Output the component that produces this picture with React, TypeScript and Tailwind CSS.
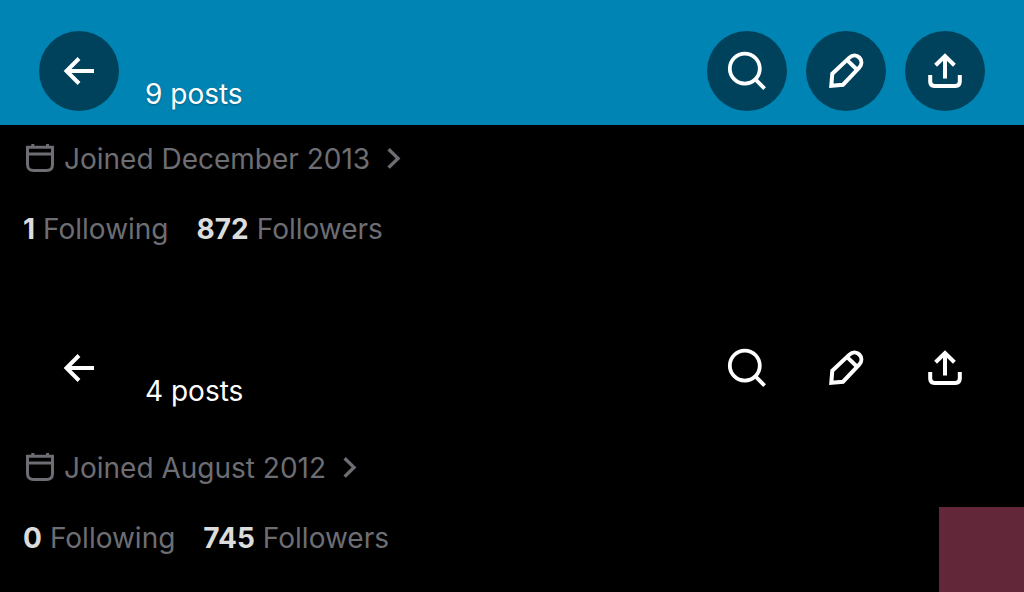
import clsx from "clsx"

type Profile = {
  posts: number
  joined: string
  following: number
  followers: number
}

const first: Profile = { posts: 9, joined: "December 2013", following: 1, followers: 872 }
const second: Profile = { posts: 4, joined: "August 2012", following: 0, followers: 745 }

const actions = [
  { label: "Search", Icon: SearchIcon },
  { label: "Edit", Icon: PencilIcon },
  { label: "Share", Icon: ShareIcon },
]

function BackIcon() {
  return (
    <svg viewBox="0 0 40 40" className="size-10" fill="none" stroke="currentColor" strokeWidth="4">
      <path d="M35 20H7M20 7.5L7.5 20L20 32.5" />
    </svg>
  )
}

function SearchIcon() {
  return (
    <svg viewBox="0 0 40 40" className="size-10" fill="none" stroke="currentColor" strokeWidth="3.8">
      <circle cx="17.8" cy="17.6" r="15" />
      <path d="M28.4 28.4L37.6 37.6" />
    </svg>
  )
}

function PencilIcon() {
  return (
    <svg viewBox="0 0 40 40" className="size-10" fill="none" stroke="currentColor" strokeWidth="4">
      <path d="M5.3 34.7L6.3 22.7L23.4 6.6C26.4 3.8 30.6 3.8 33.3 6.5C36.1 9.4 36.1 13.6 33.2 16.6L17 33.7Z" />
      <path d="M20.6 8.6L31.4 19" />
    </svg>
  )
}

function ShareIcon() {
  return (
    <svg viewBox="0 0 40 40" className="size-10" fill="none" stroke="currentColor" strokeWidth="4">
      <path d="M20 27.5V6M10.6 14.2L20 5L29.4 14.2" />
      <path d="M5.2 24V30.5C5.2 33.2 6.8 34.9 9.5 34.9H30.5C33.2 34.9 34.8 33.2 34.8 30.5V24" />
    </svg>
  )
}

function CalendarIcon() {
  return (
    <svg viewBox="0 0 28 30" className="h-[30px] w-7" fill="none" stroke="currentColor" strokeWidth="3">
      <path d="M1.5 3.2H26.5V20.5C26.5 24.4 24.3 26.6 20.5 26.6H7.5C3.7 26.6 1.5 24.4 1.5 20.5ZM1.5 10H26.5" />
      <path d="M6.8 0V3M21.6 0V3" />
    </svg>
  )
}

function ChevronIcon() {
  return (
    <svg viewBox="0 0 16 22" className="h-[22px] w-4" fill="none" stroke="currentColor" strokeWidth="3.4">
      <path d="M2.6 1.2L12 10.4L2.6 19.6" />
    </svg>
  )
}

function ProfileHeader({ posts, banner }: { posts: number; banner?: boolean }) {
  const button = clsx(
    "flex size-20 items-center justify-center rounded-full text-white",
    banner && "bg-[#00425b]"
  )

  return (
    <header className={clsx("flex items-start px-[39px] pt-[31px] pb-[13px]", banner && "bg-[#0084b4]")}>
      <button type="button" aria-label="Back" className={button}>
        <BackIcon />
      </button>
      <p
        className={clsx(
          "ml-[26px] pt-[45px] text-[28px] leading-9 text-white",
          banner && "text-shadow-[0_1px_2px_rgb(0_0_0/0.3)]"
        )}
      >
        {posts} posts
      </p>
      <div className="ml-auto flex gap-[19px]">
        {actions.map(({ label, Icon }) => (
          <button key={label} type="button" aria-label={label} className={button}>
            <Icon />
          </button>
        ))}
      </div>
    </header>
  )
}

function ProfileDetails({ profile }: { profile: Profile }) {
  return (
    <div className="px-[23px] text-[28px] leading-9 text-[#6d6e73]">
      <a href="#joined" className="flex items-center pl-[3px]">
        <CalendarIcon />
        <span className="ml-[10px]">Joined {profile.joined}</span>
        <span className="ml-4">
          <ChevronIcon />
        </span>
      </a>
      <div className="mt-[34px] flex gap-7">
        <a href="#following" className="flex gap-2">
          <b className="font-bold text-[#dcdcdc]">{profile.following}</b>
          Following
        </a>
        <a href="#followers" className="flex gap-2">
          <b className="font-bold text-[#dcdcdc]">{profile.followers}</b>
          Followers
        </a>
      </div>
    </div>
  )
}

export default function App() {
  return (
    <main className="flex min-h-screen flex-col bg-black font-['Inter',sans-serif]">
      <section className="pb-[50px]">
        <ProfileHeader posts={first.posts} banner />
        <div className="pt-4">
          <ProfileDetails profile={first} />
        </div>
      </section>
      <section>
        <ProfileHeader posts={second.posts} />
        <div className="pt-7">
          <ProfileDetails profile={second} />
        </div>
      </section>
      <div className="-mt-[49px] ml-auto h-[85px] w-[85px] bg-[#622739]" />
    </main>
  )
}
